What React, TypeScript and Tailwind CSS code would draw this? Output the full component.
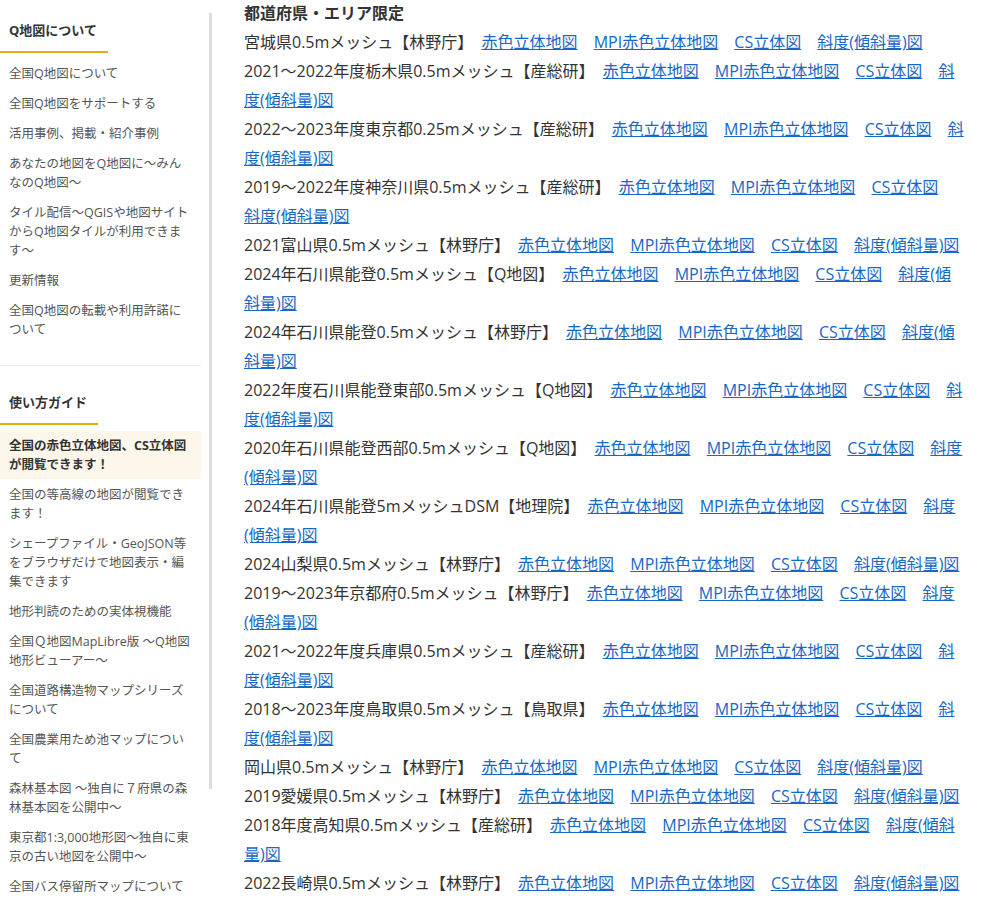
import React from "react";

const groupA = [
  "全国Q地図について",
  "全国Q地図をサポートする",
  "活用事例、掲載・紹介事例",
  "あなたの地図をQ地図に～みんなのQ地図～",
  "タイル配信～QGISや地図サイトからQ地図タイルが利用できます～",
  "更新情報",
  "全国Q地図の転載や利用許諾について",
];

const groupB = [
  "全国の赤色立体地図、CS立体図が閲覧できます！",
  "全国の等高線の地図が閲覧できます！",
  "シェープファイル・GeoJSON等をブラウザだけで地図表示・編集できます",
  "地形判読のための実体視機能",
  "全国Ｑ地図MapLibre版 ～Q地図地形ビューアー～",
  "全国道路構造物マップシリーズについて",
  "全国農業用ため池マップについて",
  "森林基本図 ～独自に７府県の森林基本図を公開中～",
  "東京都1:3,000地形図～独自に東京の古い地図を公開中～",
  "全国バス停留所マップについて",
];

const rows = [
  "宮城県0.5mメッシュ【林野庁】",
  "2021～2022年度栃木県0.5mメッシュ【産総研】",
  "2022～2023年度東京都0.25mメッシュ【産総研】",
  "2019～2022年度神奈川県0.5mメッシュ【産総研】",
  "2021富山県0.5mメッシュ【林野庁】",
  "2024年石川県能登0.5mメッシュ【Q地図】",
  "2024年石川県能登0.5mメッシュ【林野庁】",
  "2022年度石川県能登東部0.5mメッシュ【Q地図】",
  "2020年石川県能登西部0.5mメッシュ【Q地図】",
  "2024年石川県能登5mメッシュDSM【地理院】",
  "2024山梨県0.5mメッシュ【林野庁】",
  "2019～2023年京都府0.5mメッシュ【林野庁】",
  "2021～2022年度兵庫県0.5mメッシュ【産総研】",
  "2018～2023年度鳥取県0.5mメッシュ【鳥取県】",
  "岡山県0.5mメッシュ【林野庁】",
  "2019愛媛県0.5mメッシュ【林野庁】",
  "2018年度高知県0.5mメッシュ【産総研】",
  "2022長崎県0.5mメッシュ【林野庁】",
];

const links = ["赤色立体地図", "MPI赤色立体地図", "CS立体図", "斜度(傾斜量)図"];

function SideHeader({ children }: { children: React.ReactNode }) {
  return (
    <div className="inline-block pl-[9px] pr-[11px] pb-[11px] border-b-2 border-[#e6ad0e] text-[13px] leading-[20px] font-bold text-[#333]">
      {children}
    </div>
  );
}

export default function App() {
  return (
    <div
      className="flex w-[991px] h-[900px] overflow-hidden bg-white"
      style={{ fontFamily: '"Open Sans", "Noto Sans CJK JP", sans-serif' }}
    >
      <aside className="w-[201px] shrink-0 pt-[17px]">
        <SideHeader>Q地図について</SideHeader>
        <ul className="mt-[5px]">
          {groupA.map((t) => (
            <li
              key={t}
              className="px-[9px] py-[5.5px] text-[12.5px] leading-[19px] text-[#555]"
            >
              {t}
            </li>
          ))}
        </ul>
        <div className="mt-[21px] border-t border-[#ececec]" />
        <div className="pt-[23px]">
          <SideHeader>使い方ガイド</SideHeader>
        </div>
        <ul className="mt-[6px]">
          {groupB.map((t, i) => (
            <li
              key={t}
              className={
                i === 0
                  ? "px-[9px] py-[5px] text-[12.5px] leading-[19px] font-bold text-[#333] bg-[#fcf7ea]"
                  : "px-[9px] py-[5.5px] text-[12.5px] leading-[19px] text-[#555]"
              }
            >
              {t}
            </li>
          ))}
        </ul>
      </aside>
      <div className="ml-[8px] mt-[13px] w-[3px] h-[776px] shrink-0 bg-[#dedede]" />
      <main className="ml-[32px] -mt-[1px] w-[722px] shrink-0 text-[16px] leading-[29px] text-[#333]">
        <h3 className="font-bold">都道府県・エリア限定</h3>
        {rows.map((r) => (
          <p key={r}>
            {r}
            <span className="[word-spacing:4px]"> </span>
            {links.map((l, i) => (
              <React.Fragment key={l}>
                {i > 0 && <span className="[word-spacing:12px]"> </span>}
                <a href="#" className="text-[#1767c6] underline">
                  {l}
                </a>
              </React.Fragment>
            ))}
          </p>
        ))}
      </main>
    </div>
  );
}
